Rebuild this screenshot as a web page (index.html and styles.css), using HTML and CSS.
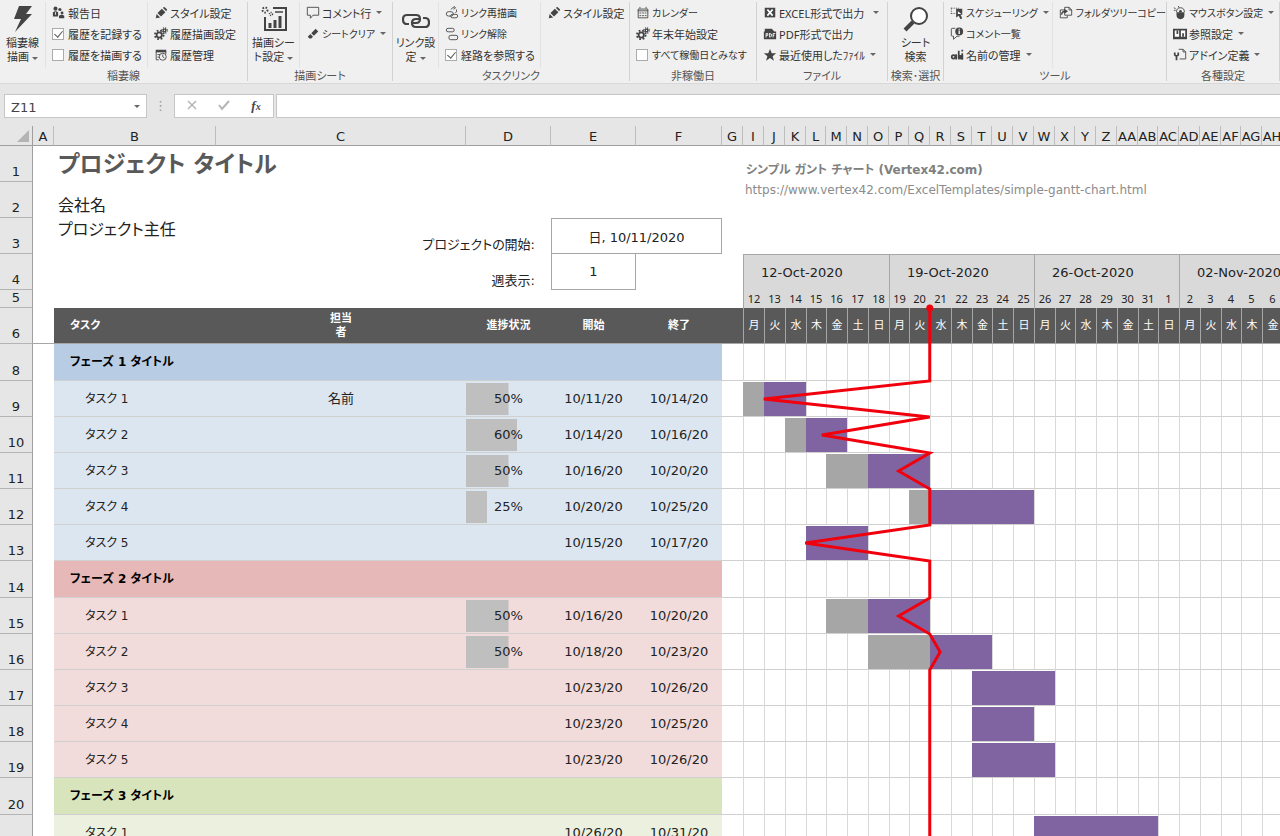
FILE: index.html
```html
<!DOCTYPE html>
<html lang="ja">
<head>
<meta charset="utf-8">
<title>プロジェクト タイトル</title>
<link rel="stylesheet" href="styles.css">
</head>
<body>
<svg class="defs" aria-hidden="true">
  <symbol id="pencil" viewBox="0 0 16 16"><path fill="#444" d="M2 14l1-5 4 4zM4 8l5-5 4 4-5 5zM10 2l2-1 3 3-1 2z"/></symbol>
  <symbol id="gears" viewBox="0 0 16 16"><g fill="none" stroke="#444"><circle cx="6" cy="9" r="3" stroke-width="2"/><circle cx="6" cy="9" r="5" stroke-width="2" stroke-dasharray="2 2"/><circle cx="12" cy="4" r="1.5" stroke-width="1.5"/><circle cx="12" cy="4" r="3" stroke-width="1.5" stroke-dasharray="1.3 1.1"/></g></symbol>
</svg>
<header class="ribbon">
  <section class="group g1">
    <div class="tools">
      <button class="big"><svg viewBox="0 0 28 28"><path fill="#444" d="M10 1h13l-6 8h6L6 27l6-13H5z"/></svg><span>稲妻線<br>描画<i class="caret"></i></span></button>
      <div class="col c1">
        <button class="item"><svg viewBox="0 0 16 16"><g fill="#444"><circle cx="4" cy="3" r="2.3"/><circle cx="9" cy="4" r="1.8"/><path d="M1 12V7q3-2 6 0v5z"/><circle cx="11.500" cy="8" r="1.600"/><path d="M8 14v-3q3-2 6 0v3z"/></g><path stroke="#f0f0f0" d="M4 7v3"/></svg>報告日</button>
        <label class="item"><input type="checkbox" checked>履歴を記録する</label>
        <label class="item"><input type="checkbox">履歴を描画する</label>
      </div>
      <div class="col">
        <button class="item"><svg><use href="#pencil"/></svg>スタイル設定</button>
        <button class="item"><svg><use href="#gears"/></svg>履歴描画設定</button>
        <button class="item"><svg viewBox="0 0 16 16"><path fill="#444" d="M2 2h12v3H2z"/><g fill="none" stroke="#444"><path d="M2.500 4v9.500h3M13.500 4v3M4 7.500h3M4 10.500h2"/><circle cx="10" cy="10" r="4"/><path d="M10 7.500V10l2 1.500"/></g></svg>履歴管理</button>
      </div>
    </div>
    <h2>稲妻線</h2>
  </section>
  <section class="group g2">
    <div class="tools">
      <button class="big"><svg viewBox="0 0 28 28"><g fill="none" stroke="#444" stroke-width="2"><path d="M13 3h13v22H5V12"/><path d="M10 23v-5M15 23v-8M20 23V11" stroke-width="3"/><circle cx="5" cy="5" r="2.500" stroke-dasharray="1.500 1.500"/><circle cx="11" cy="9" r="1.500" stroke-width="1.500" stroke-dasharray="1 1"/><path d="M15 7h8" stroke-width="1.500"/></g></svg><span>描画シー<br>ト設定<i class="caret"></i></span></button>
      <div class="col">
        <button class="item"><svg viewBox="0 0 16 16"><path fill="none" stroke="#444" d="M1.500 1.500h13v9H8L5 14v-3.500H1.500z"/></svg>コメント行<i class="caret"></i></button>
        <button class="item tight"><svg viewBox="0 0 16 16"><path fill="#444" d="M2 11l3-3 3 3-2 2H4zM6 7l5-5 3 3-5 5z"/></svg>シートクリア<i class="caret"></i></button>
      </div>
    </div>
    <h2>描画シート</h2>
  </section>
  <section class="group g3">
    <div class="tools">
      <button class="big"><svg viewBox="0 0 28 28"><g fill="none" stroke="#444" stroke-width="2.200"><path d="M7 19H5q-4 0-4-4.500T5 10h9q4 0 4 4t-4 4h-3"/><path d="M21 13h2q4 0 4 4.500T23 22h-9q-4 0-4-4t4-4h3"/></g></svg><span>リンク設<br>定<i class="caret"></i></span></button>
      <div class="col c1">
        <button class="item tight"><svg viewBox="0 0 16 16"><g fill="none" stroke="#444"><rect x="1.500" y="6.500" width="8" height="5" rx="2.500"/><rect x="6.500" y="9.500" width="8" height="4" rx="2"/><path d="M7 4q1-3 4-2M10 0l2 2-2 2M13 4q1 2-1 4"/></g></svg>リンク再描画</button>
        <button class="item tight"><svg viewBox="0 0 16 16"><g fill="none" stroke="#444"><rect x="1.500" y="1.500" width="9" height="4" rx="2"/><rect x="4.500" y="9.500" width="10" height="5" rx="2"/></g></svg>リンク解除</button>
        <label class="item"><input type="checkbox" checked>経路を参照する</label>
      </div>
      <div class="col">
        <button class="item"><svg><use href="#pencil"/></svg>スタイル設定</button>
      </div>
    </div>
    <h2>タスクリンク</h2>
  </section>
  <section class="group g4">
    <div class="tools">
      <div class="col">
        <button class="item tight"><svg viewBox="0 0 16 16"><g fill="none" stroke="#444"><path d="M2.500 3.500h11v10h-11zM2 5.500h12M4.500 1v2M11.500 1v2"/><path stroke-dasharray="2 1" d="M4 8h8M4 11h8"/></g></svg>カレンダー</button>
        <button class="item"><svg><use href="#gears"/></svg>年末年始設定</button>
        <label class="item tight"><input type="checkbox">すべて稼働日とみなす</label>
      </div>
    </div>
    <h2>非稼働日</h2>
  </section>
  <section class="group g5">
    <div class="tools">
      <div class="col">
        <button class="item"><svg viewBox="0 0 16 16"><path fill="#444" d="M2 2h12v11H2z"/><path stroke="#fff" stroke-width="2" d="M5 4l6 7M11 4l-6 7"/></svg>EXCEL形式で出力<i class="caret far"></i></button>
        <button class="item"><svg viewBox="0 0 16 16"><path fill="#444" d="M2 2h8l3 3h2v9H1V5h1z"/><path fill="none" stroke="#fff" d="M3.500 12V7.500h2v2h-2M7.500 7v4.500h1l1-1V8L8 7.500M11.500 12V7.500H14M11.500 9.500H13"/></svg>PDF形式で出力</button>
        <button class="item"><svg viewBox="0 0 16 16"><path fill="#444" d="M8 1l2 5h5l-4 3.500 1.500 5L8 11.500l-4.500 3 1.500-5L1 6h5z"/></svg>最近使用したﾌｧｲﾙ<i class="caret"></i></button>
      </div>
    </div>
    <h2>ファイル</h2>
  </section>
  <section class="group g6">
    <div class="tools">
      <button class="big"><svg viewBox="0 0 28 28"><circle cx="17" cy="11" r="8" fill="#fff" stroke="#444" stroke-width="2"/><path stroke="#444" stroke-width="4" d="M11 17l-8 8"/></svg><span>シート<br>検索</span></button>
    </div>
    <h2>検索･選択</h2>
  </section>
  <section class="group g7">
    <div class="tools">
      <div class="col c1">
        <button class="item tight"><svg viewBox="0 0 16 16"><path fill="none" stroke="#444" stroke-dasharray="1 1" d="M1 2.500h9M1.500 2v7M1 8.500h5"/><path fill="#444" d="M7 3h7v7h-2l2 4-2 1-2-4-3 2z"/><path fill="#fff" d="M9 6l4 3h-4z"/></svg>スケジューリング<i class="caret"></i></button>
        <button class="item tight"><svg viewBox="0 0 16 16"><path fill="none" stroke="#444" d="M6 1.500H2.500q-1 0-1 1v7q0 1 1 1H4V14l4-3.500h3"/><circle cx="10.500" cy="5" r="4.500" fill="#444"/><path stroke="#fff" stroke-width="1.500" d="M10.500 2v1M10.500 4v4"/></svg>コメント一覧</button>
        <button class="item"><svg viewBox="0 0 16 16"><g fill="none" stroke="#444" stroke-width="2"><circle cx="4" cy="10" r="2"/><path d="M7 7v6M10 3v9M14 6v7M14 2v2"/></g><path fill="#444" d="M9 8h6v5H9z"/></svg>名前の管理<i class="caret"></i></button>
      </div>
      <div class="col">
        <button class="item tight"><svg viewBox="0 0 16 16"><g fill="none" stroke="#444"><path d="M7 4.500H1.500v9h8V11"/><path d="M6.500 1.500h5l3 3v6h-8zM11.500 1.500v3h3"/><path stroke-width="1.500" d="M3 10q0-4 5-4M6 4l3 2-3 2"/></g></svg>フォルダツリーコピー</button>
      </div>
    </div>
    <h2>ツール</h2>
  </section>
  <section class="group g8">
    <div class="tools">
      <div class="col">
        <button class="item tight"><svg viewBox="0 0 16 16"><path fill="none" stroke="#444" d="M4 7q0-5 4.500-5T13 7M1 2l2 1M1 5h2M6 0l1 2"/><path fill="#444" d="M4 7h9v3q0 5-4.500 5T4 10z"/><circle cx="8.500" cy="6" r="1.500" fill="#444"/></svg>マウスボタン設定<i class="caret"></i></button>
        <button class="item"><svg viewBox="0 0 16 16"><path fill="#444" d="M0 2h16v12H0z"/><path fill="#fff" d="M2 4h5v7H2zM9 4h5v7H9z"/><path stroke="#444" stroke-width="2" d="M5 4v4M11.500 7v4"/></svg>参照設定<i class="caret"></i></button>
        <button class="item"><svg viewBox="0 0 16 16"><path fill="none" stroke="#444" d="M6.500 1.500h5l3 3v8h-7M11.500 1.500v3h3"/><path fill="none" stroke="#444" stroke-width="2" d="M2 5v3q2 2 4 0V5M4 9v5"/></svg>アドイン定義<i class="caret"></i></button>
      </div>
    </div>
    <h2>各種設定</h2>
  </section>
</header>
<div class="formula-bar">
  <div class="name-box"><input type="text" value="Z11" aria-label="名前ボックス"><button aria-label="一覧"><i class="caret"></i></button></div>
  <span class="grip">⋮</span>
  <div class="edit-buttons">
    <button aria-label="キャンセル"><svg viewBox="0 0 12 12"><path fill="none" stroke="#b5b5b5" stroke-width="1.500" d="M2 2l8 8M10 2l-8 8"/></svg></button>
    <button aria-label="入力"><svg viewBox="0 0 12 12"><path fill="none" stroke="#b5b5b5" stroke-width="2" d="M1 6l3 4 7-8"/></svg></button>
    <button class="fx" aria-label="関数の挿入">f<small>x</small></button>
  </div>
  <input class="formula" type="text" aria-label="数式バー">
</div>
<main class="sheet">
  <table id="grid"></table>
  <svg id="progress-line" class="progress-line" aria-hidden="true"></svg>
</main>
<script src="sheet.js"></script>
</body>
</html>
```
FILE: styles.css
```css
* { box-sizing: border-box; }
body {
  margin: 0;
  height: 100vh;
  display: flex;
  flex-direction: column;
  overflow: hidden;
  background: #e6e6e6;
  color: #222;
  font-family: "DejaVu Sans", "Noto Sans CJK JP", sans-serif;
  font-size: 13px;
  font-feature-settings: "palt";
}
button, input { font: inherit; color: inherit; font-feature-settings: inherit; }
button { border: 0; padding: 0; background: none; }
.defs { display: none; }

/* Ribbon */
.ribbon {
  display: flex;
  flex: none;
  height: 84px;
  background: #f0f0f0;
  border-bottom: 1px solid #d8d8d8;
  font-family: "Noto Sans", "Noto Sans CJK JP", sans-serif;
  font-size: 11px;
  color: #333;
  overflow: hidden;
}
.group {
  display: flex;
  flex-direction: column;
  flex: none;
  margin: 2px 0;
  border-right: 1px solid #d2d2d2;
}
.g1 { width: 248px; }
.g2 { width: 145px; }
.g3 { width: 237px; }
.g4 { width: 127px; }
.g5 { width: 131px; }
.g6 { width: 56px; }
.g7 { width: 223px; }
.g8 { flex: 1 0 113px; }
.tools { display: flex; flex: none; height: 66px; }
.group h2 {
  margin: 0;
  font-size: 11px;
  line-height: 16px;
  font-weight: 400;
  text-align: center;
  color: #555;
}
.big {
  width: 46px;
  flex: none;
  display: flex;
  flex-direction: column;
  align-items: center;
  gap: 3px;
  padding-top: 3px;
  line-height: 14px;
  border-right: 1px solid #e2e2e2;
  white-space: nowrap;
}
.g2 .big { width: 52px; }
.g6 .big { width: 100%; border: 0; }
.big svg { width: 28px; height: 28px; }
.col { display: flex; flex-direction: column; padding-left: 6px; }
.c1 { width: 102px; border-right: 1px solid #e2e2e2; }
.g7 .c1 { width: 110px; }
.item {
  display: flex;
  align-items: center;
  gap: 2px;
  height: 21px;
  white-space: nowrap;
}
.tight { font-size: 10px; }
.item svg { width: 14px; height: 14px; flex: none; }
.caret {
  display: inline-block;
  flex: none;
  margin-left: 3px;
  vertical-align: middle;
  border: 3px solid transparent;
  border-top-color: #666;
  border-bottom: 0;
}
.far { margin-left: 7px; }
.item input {
  appearance: none;
  position: relative;
  flex: none;
  width: 12px;
  height: 12px;
  margin: 0 2px 0 0;
  border: 1px solid #ababab;
  background: #fff;
}
.item input:checked::after {
  content: "";
  position: absolute;
  left: 3px;
  top: 0;
  width: 4px;
  height: 7px;
  border: solid #555;
  border-width: 0 1px 1px 0;
  transform: rotate(40deg);
}

/* Formula bar */
.formula-bar {
  display: flex;
  flex: none;
  height: 42px;
  padding: 10px 0 8px 4px;
  color: #444;
}
.name-box, .edit-buttons, .formula { border: 1px solid #c6c6c6; background: #fff; }
.name-box { display: flex; width: 143px; }
.name-box input { width: 120px; border: 0; padding: 2px 6px 0; background: none; }
.name-box button { flex: 1; line-height: 12px; }
.grip { width: 27px; text-align: center; color: #999; line-height: 24px; }
.edit-buttons { display: flex; width: 100px; padding: 0 1px; }
.edit-buttons button { flex: 1; }
.edit-buttons svg { width: 12px; height: 12px; }
.edit-buttons .fx { font-family: "Liberation Serif", serif; font-style: italic; font-weight: 700; }
.fx small { font-size: 10px; }
.formula { flex: 1; min-width: 0; margin-left: 2px; border-right: 0; padding: 0 6px; }

/* Sheet */
.sheet { position: relative; flex: 1; min-height: 0; overflow: hidden; background: #fff; }
table { table-layout: fixed; border-spacing: 0; width: 1324px; color: #222; }
th, td { padding: 0; font-weight: 400; line-height: 16px; text-align: center; white-space: nowrap; }
tr { height: 36px; }
.letters { height: 20px; }
.letters th {
  background: #e6e6e6;
  border-bottom: 1px solid #9f9f9f;
  border-right: 1px solid #bdbdbd;
  vertical-align: bottom;
}
.letters th:first-child { border-right-color: #9f9f9f; }
.corner { display: block; margin: 0 3px 3px auto; width: 12px; height: 12px; background: #b4b4b4; clip-path: polygon(100% 0, 100% 100%, 0 100%); }
.num {
  background: #e6e6e6;
  border-right: 1px solid #9f9f9f;
  border-bottom: 1px solid #b4b4b4;
  vertical-align: bottom;
  padding-bottom: 1px;
}
.left { text-align: left; padding-left: 4px; }
.top { vertical-align: top; }
.bottom { vertical-align: bottom; }
.title { font-size: 23px; line-height: 36px; font-weight: 700; color: #595959; vertical-align: top; }
.owner { font-size: 16px; line-height: 24px; }
.label { text-align: right; vertical-align: bottom; padding-right: 16px; line-height: 19px; }
.entry {
  display: block;
  width: 100%;
  height: 36px;
  border: 1px solid #a6a6a6;
  background: #fff;
  text-align: center;
  border-radius: 0;
}
.entry.second { border-top: 0; }
.credit { font-size: 12px; font-weight: 700; color: #808080; padding: 16px 0 0 3px; }
.link { font-size: 12px; padding-left: 2px; vertical-align: top; }
.link a { color: #8c8c8c; text-decoration: none; }
.week { background: #d9d9d9; border-top: 1px solid #a6a6a6; border-left: 1px solid #a6a6a6; text-align: left; padding-left: 17px; }
.short { height: 18px; }
.date { background: #d9d9d9; font-family: "Noto Sans", sans-serif; font-size: 11px; }
.monday { border-left: 1px solid #a6a6a6; }
.head th:not(.num) {
  background: #595959;
  border-bottom: 1px solid #a6a6a6;
  color: #fff;
  font-size: 11px;
  line-height: 14px;
  font-weight: 700;
}
.head th.blank { background: #fff; }
.head .name { text-align: left; padding-left: 16px; }
.head th.weekday { font-weight: 400; border-left: 1px solid #a6a6a6; }
.phase { height: 37px; }
.row .name { text-align: left; font-size: 12px; }
.phase .name { padding-left: 16px; font-weight: 700; color: #000; }
.task .name { padding-left: 31px; }
.fill, .gap { border-bottom: 1px solid #d0d0d0; }
.done-share { background: linear-gradient(#bfbfbf, #bfbfbf) no-repeat 0 50% / var(--share) 32px; }
.p1.phase .fill { background-color: #b8cce4; }
.p1.task .fill { background-color: #dce6f1; }
.p2.phase .fill { background-color: #e6b8b7; }
.p2.task .fill { background-color: #f2dcdb; }
.p3.phase .fill { background-color: #d8e4bc; }
.p3.task .fill { background-color: #ebf1de; }
.day { border-left: 1px solid #d9d9d9; border-bottom: 1px solid #d0d0d0; box-shadow: inset 0 1px #fff; }
.done, .plan { border-left: 0; }
.done { background: #a6a6a6; }
.plan { background: #8064a2; }
.progress-line { position: absolute; left: 0; top: 0; width: 1324px; height: 100%; pointer-events: none; }
.progress-line polyline { fill: none; stroke: #f0000c; stroke-width: 3; }
.progress-line circle { fill: #f0000c; }
```
FILE: sheet.js
```js
const DAYS = 28;
const TODAY = 9;
const FIXED = [33, 21, 162, 250, 85, 85, 86, 21];
const dayWidth = d => (d % 4 === 3 ? 20 : 21);
const dayX = d => 743 + d * 20.75;
const days = fn => Array.from({ length: DAYS }, (_, d) => fn(d)).join('');

// done / plan are [first day, last day]; tip is where the progress line points
const rows = [
  { n: 8, p: 1, phase: 'フェーズ 1 タイトル' },
  { n: 9, p: 1, name: 'タスク 1', who: '名前', share: 50, from: '10/11/20', to: '10/14/20', done: [0, 0], plan: [1, 2], tip: 1 },
  { n: 10, p: 1, name: 'タスク 2', share: 60, from: '10/14/20', to: '10/16/20', done: [2, 2], plan: [3, 4], tip: 3.8 },
  { n: 11, p: 1, name: 'タスク 3', share: 50, from: '10/16/20', to: '10/20/20', done: [4, 5], plan: [6, 8], tip: 7.5 },
  { n: 12, p: 1, name: 'タスク 4', share: 25, from: '10/20/20', to: '10/25/20', done: [8, 8], plan: [9, 13] },
  { n: 13, p: 1, name: 'タスク 5', from: '10/15/20', to: '10/17/20', plan: [3, 5], tip: 3 },
  { n: 14, p: 2, phase: 'フェーズ 2 タイトル' },
  { n: 15, p: 2, name: 'タスク 1', share: 50, from: '10/16/20', to: '10/20/20', done: [4, 5], plan: [6, 8], tip: 7.5 },
  { n: 16, p: 2, name: 'タスク 2', share: 50, from: '10/18/20', to: '10/23/20', done: [6, 8], plan: [9, 11], tip: 9.5 },
  { n: 17, p: 2, name: 'タスク 3', from: '10/23/20', to: '10/26/20', plan: [11, 14] },
  { n: 18, p: 2, name: 'タスク 4', from: '10/23/20', to: '10/25/20', plan: [11, 13] },
  { n: 19, p: 2, name: 'タスク 5', from: '10/23/20', to: '10/26/20', plan: [11, 14] },
  { n: 20, p: 3, phase: 'フェーズ 3 タイトル' },
  { n: 21, p: 3, name: 'タスク 1', from: '10/26/20', to: '10/31/20', plan: [14, 19] }
];

const columnName = i => (i < 26 ? '' : 'A') + String.fromCharCode(65 + (i % 26));
const within = (range, d) => range && d >= range[0] && d <= range[1];
const num = n => `<th class="num" scope="row">${n}</th>`;

const cols = FIXED.map(w => `<col style="width:${w}px">`).join('') +
  days(d => `<col style="width:${dayWidth(d)}px">`);

const letters = '<tr class="letters"><th><span class="corner"></span></th>' +
  [...'ABCDEFG'].map(c => `<th>${c}</th>`).join('') +
  days(d => `<th>${columnName(d + 8)}</th>`) + '</tr>';

const heading = `
<tr>${num(1)}<td></td><td class="left title" colspan="6">プロジェクト タイトル</td><td class="left top credit" colspan="28">シンプル ガント チャート (Vertex42.com)</td></tr>
<tr>${num(2)}<td></td><td class="left bottom owner" colspan="6">会社名</td><td class="left link" colspan="28"><a href="https://www.vertex42.com/ExcelTemplates/simple-gantt-chart.html">https://www.vertex42.com/ExcelTemplates/simple-gantt-chart.html</a></td></tr>
<tr>${num(3)}<td></td><td class="left top owner">プロジェクト主任</td><td class="label" colspan="2"><label for="start">プロジェクトの開始:</label></td><td colspan="2"><input class="entry" id="start" value="日, 10/11/2020"></td><td colspan="29"></td></tr>
<tr>${num(4)}<td></td><td></td><td class="label" colspan="2"><label for="week">週表示:</label></td><td><input class="entry second" id="week" value="1"></td><td colspan="2"></td>
${['12-Oct-2020', '19-Oct-2020', '26-Oct-2020', '02-Nov-2020'].map(w => `<td class="week" colspan="7">${w}</td>`).join('')}</tr>
<tr class="short">${num(5)}<td colspan="7"></td>${days(d => `<td class="date${d % 7 ? '' : ' monday'}">${d < 20 ? d + 12 : d - 19}</td>`)}</tr>
<tr class="head">${num(6)}<th class="blank"></th><th class="name">タスク</th><th>担当<br>者</th><th>進捗状況</th><th>開始</th><th>終了</th><th></th>${days(d => `<th class="weekday">${'月火水木金土日'[d % 7]}</th>`)}</tr>`;

const body = rows.map(r => {
  const cells = r.phase
    ? `<td class="fill name" colspan="5">${r.phase}</td>`
    : `<td class="fill name">${r.name}</td><td class="fill">${r.who || ''}</td>` +
      (r.share ? `<td class="fill done-share" style="--share:${r.share}%">${r.share}%</td>` : '<td class="fill"></td>') +
      `<td class="fill">${r.from}</td><td class="fill">${r.to}</td>`;
  return `<tr class="row p${r.p} ${r.phase ? 'phase' : 'task'}">${num(r.n)}<td></td>${cells}<td class="gap"></td>` +
    days(d => `<td class="day${within(r.done, d) ? ' done' : within(r.plan, d) ? ' plan' : ''}"></td>`) + '</tr>';
}).join('');

const grid = document.getElementById('grid');
grid.innerHTML = `<colgroup>${cols}</colgroup><thead>${letters}</thead><tbody>${heading}${body}</tbody>`;

const startY = grid.querySelector('.head').offsetTop;
const points = [[dayX(TODAY), startY]];
grid.querySelectorAll('.row').forEach((tr, i) => {
  const y = tr.offsetTop;
  points.push([dayX(TODAY), y]);
  if (rows[i].tip) points.push([dayX(rows[i].tip), y + tr.offsetHeight / 2]);
  points.push([dayX(TODAY), y + tr.offsetHeight]);
});
document.getElementById('progress-line').innerHTML =
  `<polyline points="${points.map(p => p.join()).join(' ')}"/><circle cx="${dayX(TODAY)}" cy="${startY}" r="3.5"/>`;
```
